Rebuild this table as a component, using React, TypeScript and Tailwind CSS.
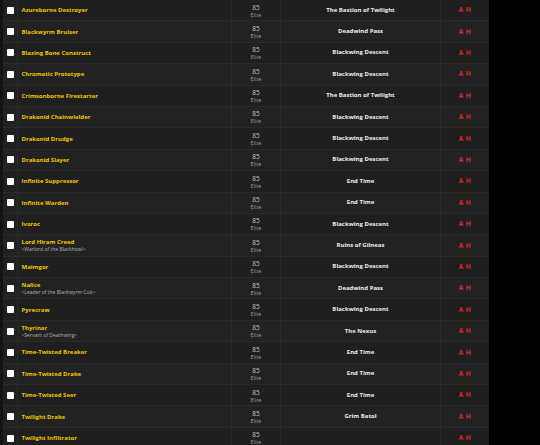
import React from "react";

const mobs = [
  { name: "Azureborne Destroyer", zone: "The Bastion of Twilight" },
  { name: "Blackwyrm Bruiser", zone: "Deadwind Pass" },
  { name: "Blazing Bone Construct", zone: "Blackwing Descent" },
  { name: "Chromatic Prototype", zone: "Blackwing Descent" },
  { name: "Crimsonborne Firestarter", zone: "The Bastion of Twilight" },
  { name: "Drakonid Chainwielder", zone: "Blackwing Descent" },
  { name: "Drakonid Drudge", zone: "Blackwing Descent" },
  { name: "Drakonid Slayer", zone: "Blackwing Descent" },
  { name: "Infinite Suppressor", zone: "End Time" },
  { name: "Infinite Warden", zone: "End Time" },
  { name: "Ivoroc", zone: "Blackwing Descent" },
  { name: "Lord Hiram Creed", tag: "<Warlord of the Blackhowl>", zone: "Ruins of Gilneas" },
  { name: "Maimgor", zone: "Blackwing Descent" },
  { name: "Nalice", tag: "<Leader of the Blackwyrm Cult>", zone: "Deadwind Pass" },
  { name: "Pyrecraw", zone: "Blackwing Descent" },
  { name: "Thyrinar", tag: "<Servant of Deathwing>", zone: "The Nexus" },
  { name: "Time-Twisted Breaker", zone: "End Time" },
  { name: "Time-Twisted Drake", zone: "End Time" },
  { name: "Time-Twisted Seer", zone: "End Time" },
  { name: "Twilight Drake", zone: "Grim Batol" },
  { name: "Twilight Infiltrator", zone: "" },
];

export default function App() {
  return (
    <div className="flex h-[445px] w-[540px] overflow-hidden bg-black font-['Open_Sans',sans-serif]">
      <div className="w-[3px] shrink-0 bg-[#141414]" />
      <div className="flex w-[486px] shrink-0 flex-col bg-[#202020]">
        {mobs.map((mob, i) => (
          <div
            key={mob.name}
            className={`flex h-[21.4px] shrink-0 border-b border-[#2a2a2a] ${
              i % 2 === 0 ? "bg-[#1f1f1f]" : "bg-[#222222]"
            }`}
          >
            <div className="flex w-[15px] shrink-0 items-center justify-center border-r border-[#2a2a2a]">
              <span className="ml-[1px] block h-[7px] w-[7px] rounded-[1px] bg-white" />
            </div>
            <div className="flex w-[214px] shrink-0 flex-col justify-center border-r border-[#2a2a2a] pl-[3.5px]">
              <span className="text-[6px] font-bold leading-[8px] text-[#f0c400]">
                {mob.name}
              </span>
              {mob.tag && (
                <span className="text-[5px] leading-[7px] text-[#b4b4b4]">
                  {mob.tag}
                </span>
              )}
            </div>
            <div className="flex w-[49px] shrink-0 flex-col items-center border-r border-[#2a2a2a] pt-[3.5px]">
              <span className="text-[6.5px] leading-[8px] text-[#c4c4c4]">85</span>
              <span className="text-[5.5px] leading-[7px] text-[#999999]">Elite</span>
            </div>
            <div className="flex w-[160px] shrink-0 items-center justify-center border-r border-[#2a2a2a]">
              <span className="text-[6px] font-bold text-[#eeeeee]">{mob.zone}</span>
            </div>
            <div className="flex w-[48px] shrink-0 items-center justify-center">
              <span className="text-[6.5px] font-bold tracking-[0.5px] text-[#d42a2a]">A H</span>
            </div>
          </div>
        ))}
      </div>
    </div>
  );
}
